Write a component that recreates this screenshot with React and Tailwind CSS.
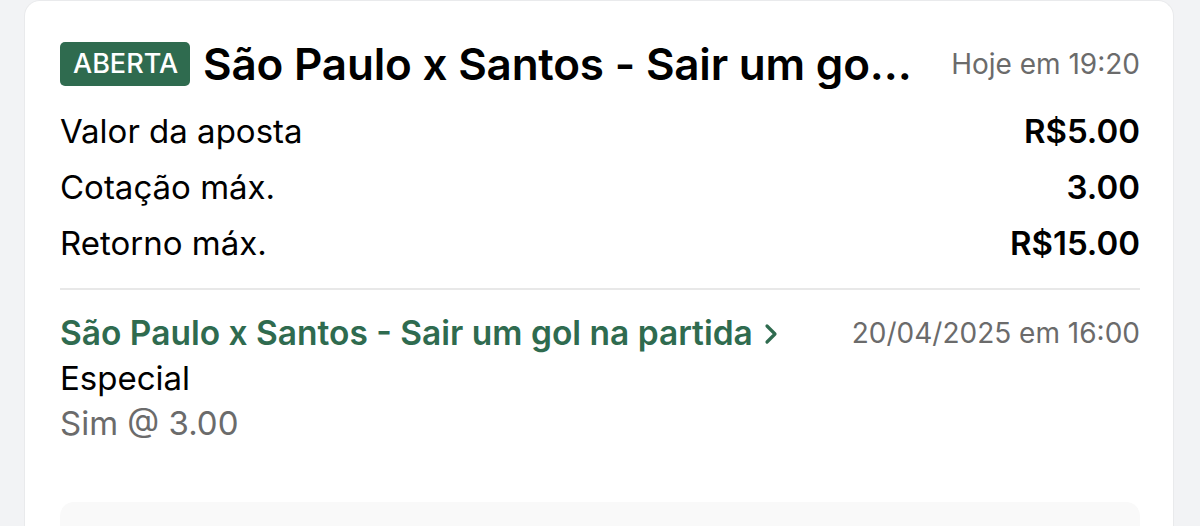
import { ChevronRight } from 'lucide-react';

const rows = [
  { label: 'Valor da aposta', value: 'R$5.00' },
  { label: 'Cotação máx.', value: '3.00' },
  { label: 'Retorno máx.', value: 'R$15.00' },
];

const App = () => {
  return (
    <div className="h-[526px] overflow-hidden bg-[#f2f3f5] font-['Inter','Noto_Sans',sans-serif]">
      <div className="ml-[24px] w-[1150px] h-full bg-white rounded-t-[16px] border border-b-0 border-[#e9eaec] pl-[35px] pr-[33px]">
        {/* header */}
        <div className="flex items-center pt-[41px] h-[85px]">
          <span className="shrink-0 h-[44px] pl-[13px] pr-[12px] rounded-[5px] bg-[#2f6b4f] text-white text-[27px] leading-[44px] font-medium">
            ABERTA
          </span>
          <span className="ml-[13px] min-w-0 flex-1 truncate text-[44px] leading-[50px] font-semibold tracking-[-0.2px] text-black">
            São Paulo x Santos - Sair um gol na partida
          </span>
          <span className="shrink-0 ml-[30px] text-[28px] text-[#6b6b6b]">Hoje em 19:20</span>
        </div>

        {/* amounts */}
        <div className="mt-[17px]">
          {rows.map((r) => (
            <div key={r.label} className="flex justify-between leading-[56px] text-[33px] text-black">
              <span>{r.label}</span>
              <span className="font-semibold">{r.value}</span>
            </div>
          ))}
        </div>

        <div className="mt-[17px] h-[2px] bg-[#e8e8e8]" />

        {/* selection */}
        <div className="mt-[21px] leading-[45px] text-[33px]">
          <div className="flex justify-between">
            <span className="flex items-center text-[33.5px] font-semibold text-[#2f6b4f]">
              São Paulo x Santos - Sair um gol na partida
              <ChevronRight className="ml-[2px] h-[32px] w-[32px]" strokeWidth={2.4} />
            </span>
            <span className="text-[28px] text-[#6b6b6b]">20/04/2025 em 16:00</span>
          </div>
          <div className="text-black">Especial</div>
          <div className="text-[#6b6b6b]">Sim @ 3.00</div>
        </div>

        <div className="mt-[56px] h-[80px] rounded-[14px] bg-[#f9f9f9]" />
      </div>
    </div>
  );
};

export default App;
